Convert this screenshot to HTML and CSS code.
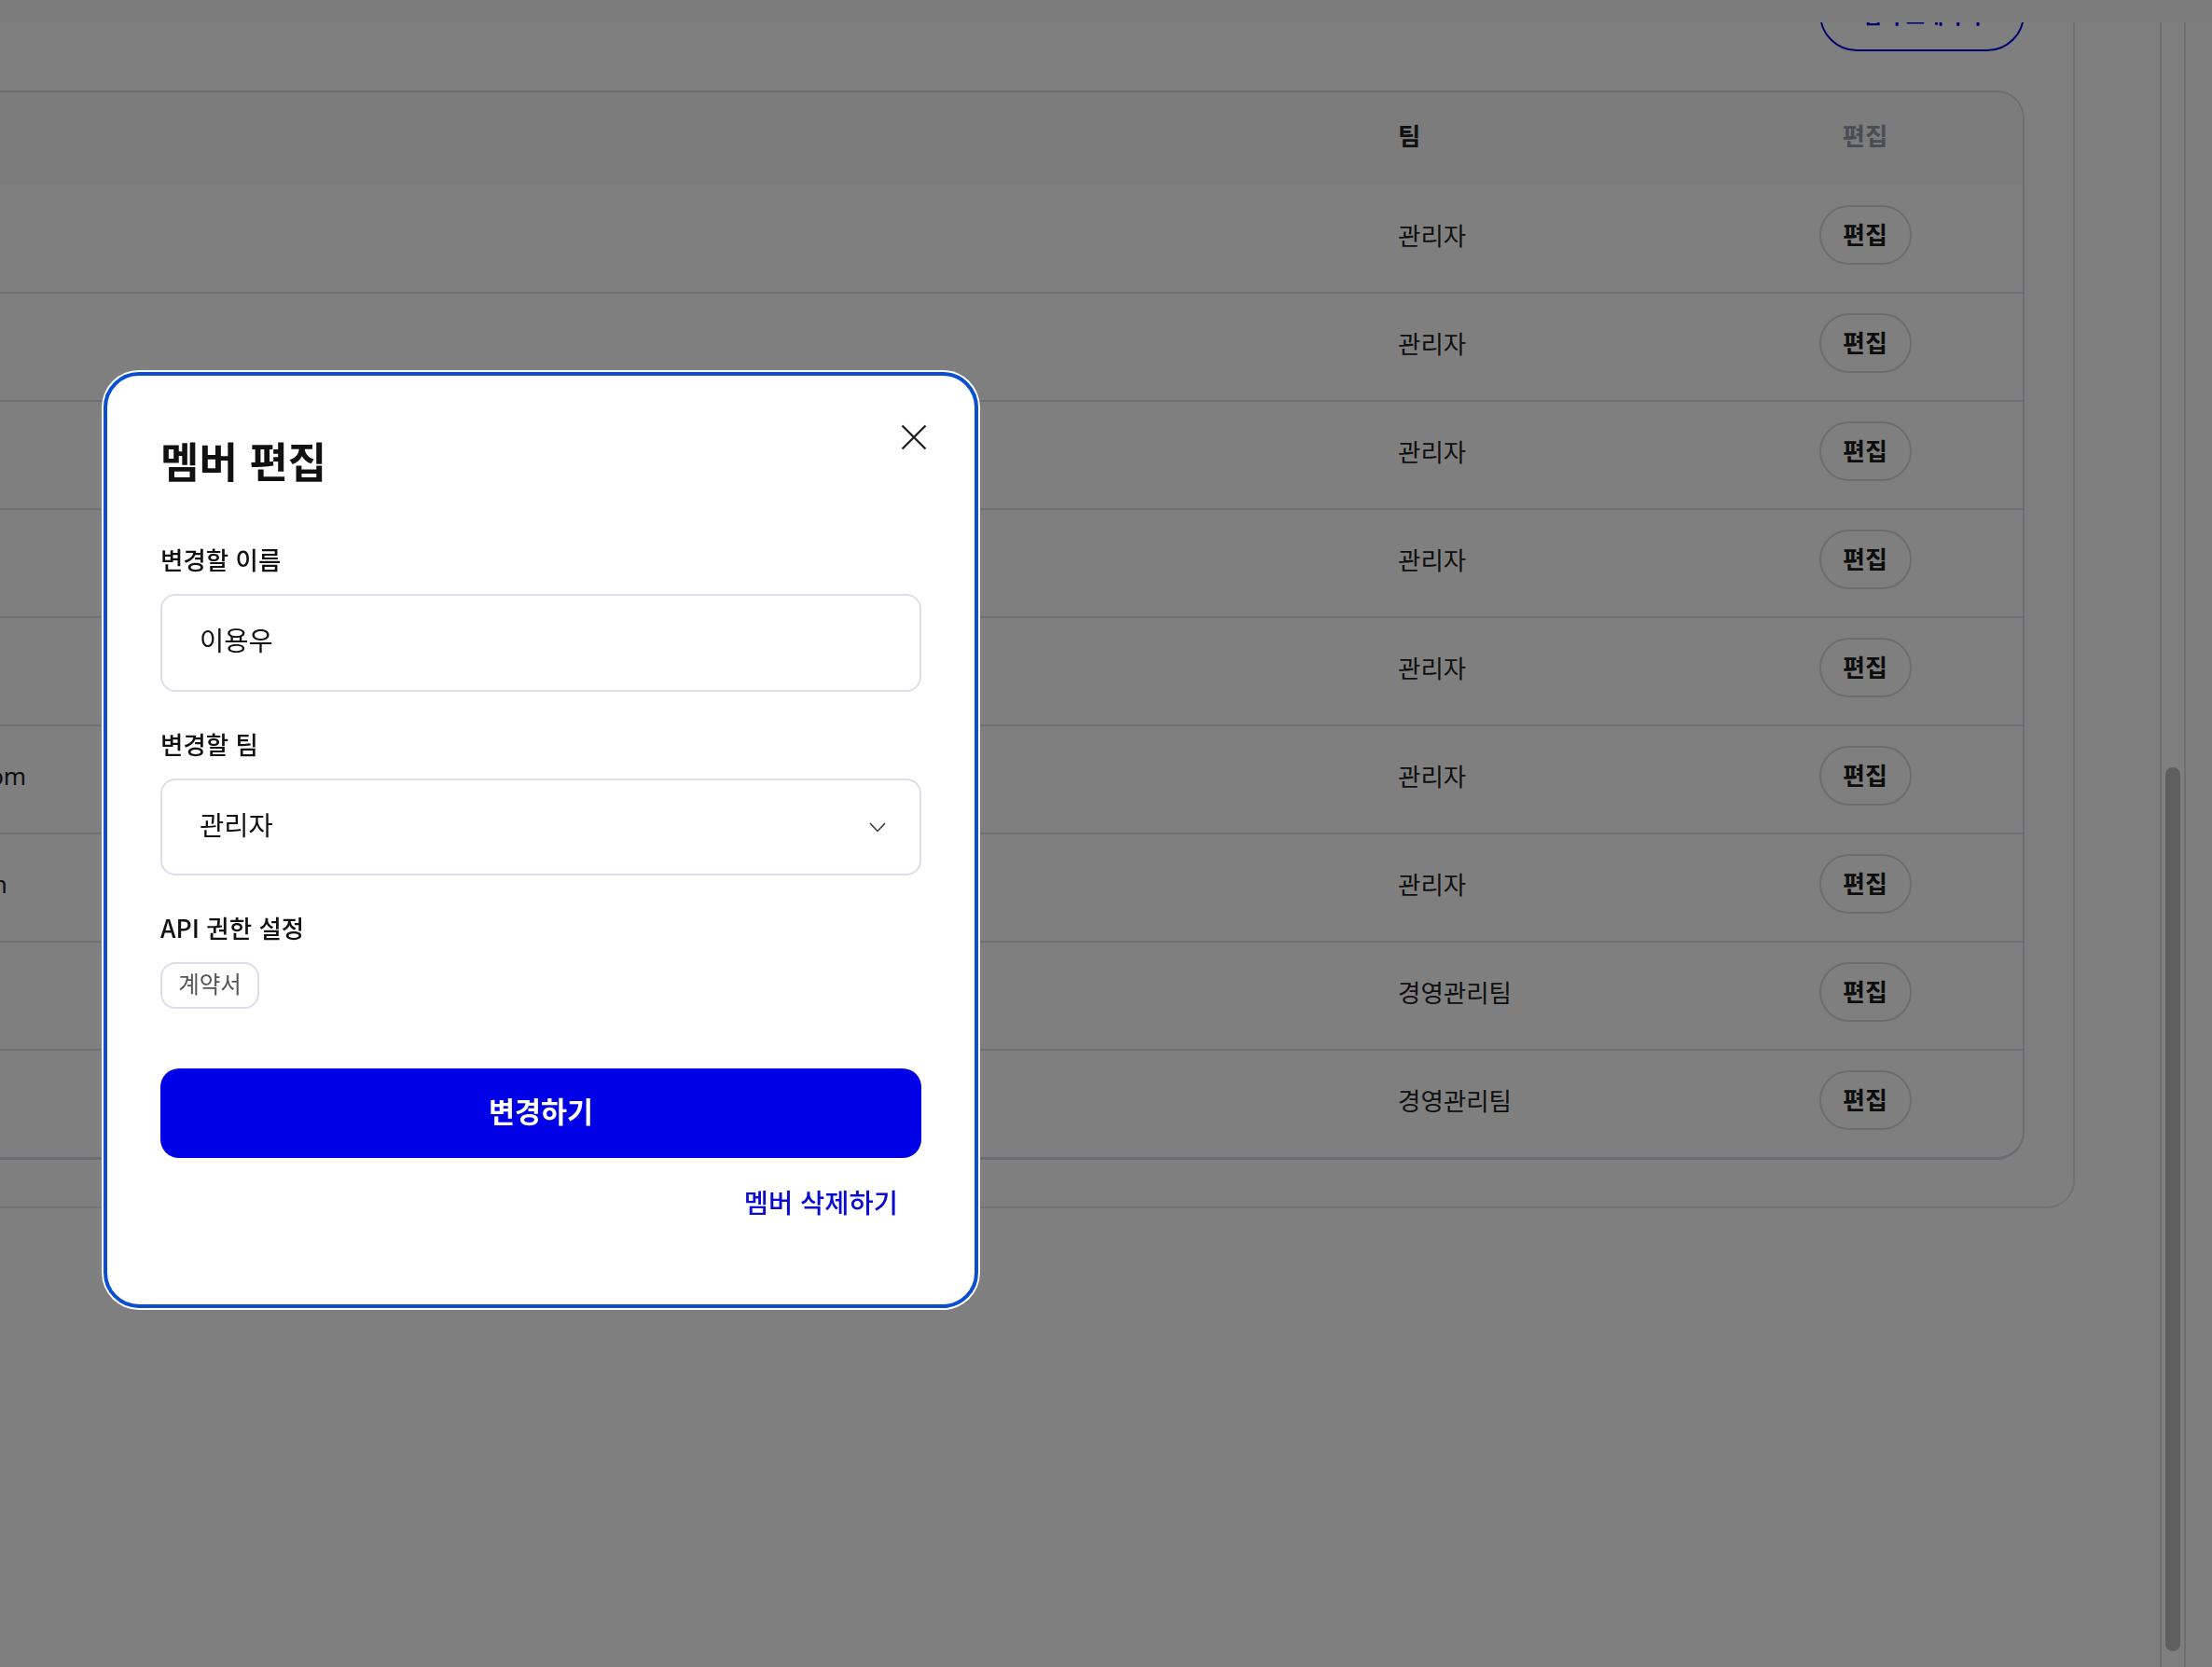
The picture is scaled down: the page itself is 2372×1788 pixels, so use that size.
FILE: index.html
```html
<!DOCTYPE html>
<html lang="ko">
<head>
<meta charset="utf-8">
<title>멤버 편집</title>
<link rel="stylesheet" href="styles.css">
</head>
<body>
<header class="topbar"></header>
<div class="layout">
  <main class="content">
    <section class="panel">
      <div class="panel-actions">
        <button class="invite-btn" type="button">멤버 초대하기</button>
      </div>
      <div class="table-card">
        <div class="trow thead">
          <div class="cell email"></div>
          <div class="cell team">팀</div>
          <div class="cell edit">편집</div>
        </div>
        <div class="trow">
          <div class="cell email">admin@lbox.co.kr</div>
          <div class="cell team">관리자</div>
          <div class="cell edit"><button class="edit-btn" type="button">편집</button></div>
        </div>
        <div class="trow">
          <div class="cell email">minji.kim@lbox.co.kr</div>
          <div class="cell team">관리자</div>
          <div class="cell edit"><button class="edit-btn" type="button">편집</button></div>
        </div>
        <div class="trow">
          <div class="cell email">sh.park@lbox.co.kr</div>
          <div class="cell team">관리자</div>
          <div class="cell edit"><button class="edit-btn" type="button">편집</button></div>
        </div>
        <div class="trow">
          <div class="cell email">jiwon.choi@lbox.co.kr</div>
          <div class="cell team">관리자</div>
          <div class="cell edit"><button class="edit-btn" type="button">편집</button></div>
        </div>
        <div class="trow">
          <div class="cell email">hyunwoo.j@lbox.co.kr</div>
          <div class="cell team">관리자</div>
          <div class="cell edit"><button class="edit-btn" type="button">편집</button></div>
        </div>
        <div class="trow">
          <div class="cell email">yongwoolee@contract.com</div>
          <div class="cell team">관리자</div>
          <div class="cell edit"><button class="edit-btn" type="button">편집</button></div>
        </div>
        <div class="trow">
          <div class="cell email">seoyeon.h@lboxmail.com</div>
          <div class="cell team">관리자</div>
          <div class="cell edit"><button class="edit-btn" type="button">편집</button></div>
        </div>
        <div class="trow">
          <div class="cell email">dh.yoon@lbox.co.kr</div>
          <div class="cell team">경영관리팀</div>
          <div class="cell edit"><button class="edit-btn" type="button">편집</button></div>
        </div>
        <div class="trow">
          <div class="cell email">eunji.seo@lbox.co.kr</div>
          <div class="cell team">경영관리팀</div>
          <div class="cell edit"><button class="edit-btn" type="button">편집</button></div>
        </div>
      </div>
    </section>
  </main>
  <div class="scrolltrack"><div class="thumb"></div></div>
  <div class="outer-strip"></div>
</div>

<div class="overlay"></div>

<div class="modal" role="dialog" aria-label="멤버 편집">
  <button class="close-btn" type="button" aria-label="닫기">
    <svg width="28" height="28" viewBox="0 0 28 28"><path d="M1.5 1.5 L26.5 26.5 M26.5 1.5 L1.5 26.5" stroke="#222" stroke-width="2.4" fill="none"/></svg>
  </button>
  <h2 class="modal-title">멤버 편집</h2>

  <div class="field">
    <div class="field-label">변경할 이름</div>
    <div class="input">이용우</div>
  </div>

  <div class="field">
    <div class="field-label">변경할 팀</div>
    <div class="input select">
      <span>관리자</span>
      <svg width="18" height="11" viewBox="0 0 18 11"><path d="M1 1 L9 9.5 L17 1" stroke="#333" stroke-width="1.5" fill="none"/></svg>
    </div>
  </div>

  <div class="field-label">API 권한 설정</div>
  <div class="tags"><span class="tag">계약서</span></div>

  <button class="submit" type="button">변경하기</button>
  <div class="delete-row"><span class="delete-link">멤버 삭제하기</span></div>
</div>
</body>
</html>
```

FILE: styles.css
```css
* { box-sizing: border-box; }
html, body { margin: 0; padding: 0; }
body {
  width: 2372px;
  height: 1788px;
  overflow: hidden;
  background: #ffffff;
  font-family: "Noto Sans CJK KR", "Noto Sans", sans-serif;
  color: #222222;
}
button { font-family: inherit; }

.topbar {
  position: fixed;
  top: 0; left: 0; right: 0;
  height: 24px;
  background: #f6f6f8;
  z-index: 5;
}

.layout { display: flex; height: 1788px; }
.content { flex: 0 0 2316px; overflow: hidden; }

.scrolltrack {
  flex: 0 0 28px;
  border-left: 2px solid #dedede;
  border-right: 2px solid #dedede;
  padding: 823px 4px 0;
}
.thumb { width: 16px; height: 948px; border-radius: 8px; background: #bfbfbf; }
.outer-strip { flex: 1; background: #fafafa; }

/* background page */
.panel {
  margin: -70px 0 0 -400px;
  width: 2625px;
  border: 2px solid #e4e4ee;
  border-radius: 30px;
  padding: 43px 52px 50px 52px;
}
.panel-actions { display: flex; justify-content: flex-end; margin-bottom: 42px; }
.invite-btn {
  width: 220px;
  height: 80px;
  border: 2px solid #0000e6;
  border-radius: 40px;
  background: #fff;
  color: #0000e6;
  font-size: 22px;
  font-weight: 700;
}

.table-card {
  border: 2px solid #d9d9e6;
  border-bottom-width: 3px;
  border-radius: 30px;
  overflow: hidden;
}
.trow {
  display: grid;
  grid-template-columns: 1fr 401px 200px;
  padding: 0 69px 8px 40px;
  height: 116px;
  border-top: 2px solid #dedee9;
  align-items: center;
}
.trow.thead { height: 99px; border-top: 0; background: #f9f9fa; }
.trow.thead + .trow { border-top: 0; height: 115px; }
.cell { font-size: 26.5px; line-height: 30px; }
.thead .cell { font-weight: 700; color: #959aa6; }
.cell.email { font-family: "Noto Sans", sans-serif; font-size: 26px; color: #222; white-space: nowrap; }
.cell.team { color: #222; }
.cell.edit { display: flex; justify-content: center; }
.edit-btn {
  width: 99px;
  height: 64px;
  border: 2px solid #d9d9e4;
  border-radius: 32px;
  background: #fff;
  color: #1a1a1a;
  font-size: 26px;
  font-weight: 700;
  padding: 0 0 3px;
}

.overlay {
  position: fixed;
  inset: 0;
  background: rgba(0, 0, 0, 0.5);
  z-index: 10;
}

/* modal */
.modal {
  position: fixed;
  left: 111px;
  top: 399px;
  width: 938px;
  z-index: 11;
  background: #fff;
  border: 4px solid #0b4fd1;
  border-radius: 38px;
  box-shadow: 0 0 0 2px #fff;
  padding: 70px 57px 91px;
}
.close-btn {
  position: absolute;
  top: 52px;
  right: 51px;
  width: 28px;
  height: 28px;
  padding: 0;
  border: 0;
  background: none;
  display: block;
}
.close-btn svg { display: block; }
.modal-title {
  margin: 0 0 73px;
  font-size: 45px;
  line-height: 42px;
  font-weight: 700;
  color: #111;
}
.field { margin-bottom: 44px; }
.field-label {
  font-size: 26.5px;
  line-height: 24px;
  font-weight: 500;
  color: #111;
  margin-bottom: 25px;
}
.input {
  height: 105px;
  border: 2px solid #dedde9;
  border-radius: 16px;
  padding: 0 40px 8px;
  display: flex;
  align-items: center;
  font-size: 28.5px;
  color: #111;
}
.input.select { height: 104px; justify-content: space-between; padding-right: 36px; }
.input.select svg { display: block; margin-top: 8px; }
.tags { display: flex; }
.tag {
  display: inline-flex;
  align-items: center;
  justify-content: center;
  width: 106px;
  height: 50px;
  border: 2px solid #dedde9;
  border-radius: 16px;
  padding-bottom: 5px;
  font-size: 24.5px;
  color: #555;
}
.submit {
  display: block;
  width: 100%;
  height: 96px;
  margin-top: 64px;
  border: 0;
  border-radius: 20px;
  background: #0000e6;
  color: #fff;
  font-size: 30.5px;
  font-weight: 700;
  padding: 0 0 6px;
}
.delete-row {
  margin-top: 33px;
  text-align: right;
  padding-right: 25px;
  line-height: 27px;
}
.delete-link {
  font-size: 28.5px;
  font-weight: 500;
  color: #0a0ad2;
}
```
